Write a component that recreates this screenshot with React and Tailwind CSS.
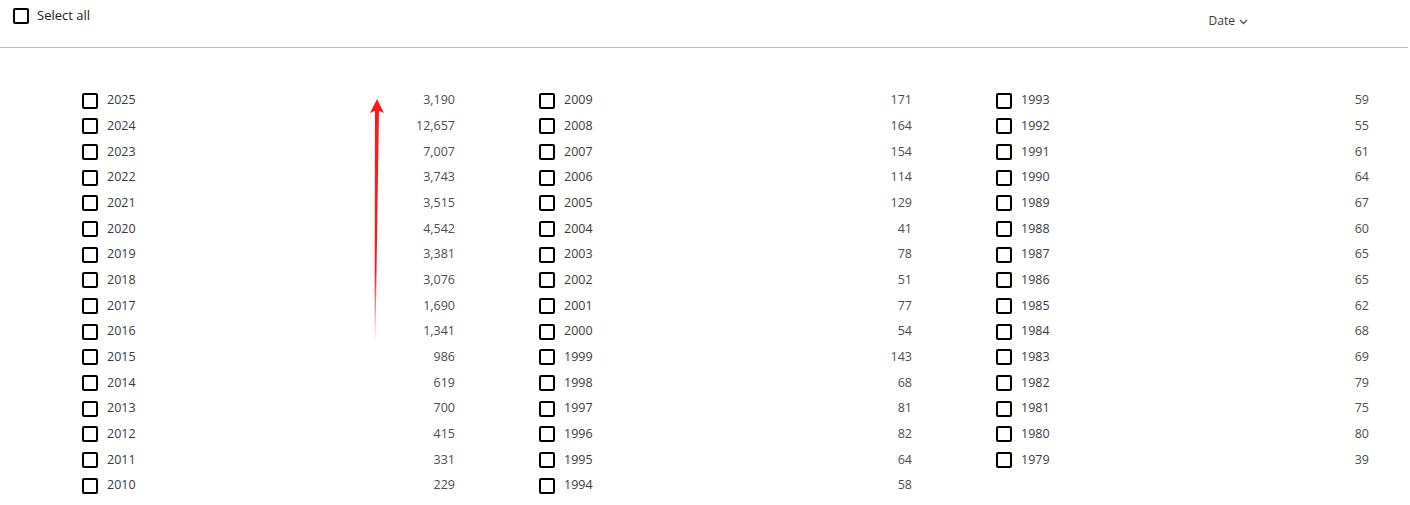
import React from 'react';

const columns = [
    [
        ['2025', '3,190'], ['2024', '12,657'], ['2023', '7,007'], ['2022', '3,743'],
        ['2021', '3,515'], ['2020', '4,542'], ['2019', '3,381'], ['2018', '3,076'],
        ['2017', '1,690'], ['2016', '1,341'], ['2015', '986'], ['2014', '619'],
        ['2013', '700'], ['2012', '415'], ['2011', '331'], ['2010', '229'],
    ],
    [
        ['2009', '171'], ['2008', '164'], ['2007', '154'], ['2006', '114'],
        ['2005', '129'], ['2004', '41'], ['2003', '78'], ['2002', '51'],
        ['2001', '77'], ['2000', '54'], ['1999', '143'], ['1998', '68'],
        ['1997', '81'], ['1996', '82'], ['1995', '64'], ['1994', '58'],
    ],
    [
        ['1993', '59'], ['1992', '55'], ['1991', '61'], ['1990', '64'],
        ['1989', '67'], ['1988', '60'], ['1987', '65'], ['1986', '65'],
        ['1985', '62'], ['1984', '68'], ['1983', '69'], ['1982', '79'],
        ['1981', '75'], ['1980', '80'], ['1979', '39'],
    ],
];

const Box = () => (
    <span className="block w-4 h-4 shrink-0 border-2 border-black rounded-[2px] bg-white" />
);

const YearRow = ({ year, count }) => (
    <label className="flex items-center h-[25.67px] cursor-pointer">
        <Box />
        <span className="ml-[9px] text-[12.5px] text-[#3a3a3a]">{year}</span>
        <span className="ml-auto text-[12.5px] text-[#4d4d4d]">{count}</span>
    </label>
);

export default function App() {
    return (
        <div className="relative w-[1408px] h-[505px] bg-white" style={{ fontFamily: '"Open Sans", "Liberation Sans", sans-serif' }}>
            <div className="flex h-[48px] border-b border-[#bdbdbd]">
                <label className="flex items-center h-[16px] mt-[8px] ml-[13px] cursor-pointer">
                    <Box />
                    <span className="ml-[8px] text-[13px] text-[#1a1a1a]">Select all</span>
                </label>
                <button className="flex items-center ml-auto mr-[160px] mt-[12px] h-[18px] text-[12px] text-[#3a3a3a]">
                    Date
                    <svg className="ml-[4px] mt-[1px]" width="9" height="6" viewBox="0 0 9 6" fill="none">
                        <path d="M1 1l3.5 3.5L8 1" stroke="#555" strokeWidth="1.3" />
                    </svg>
                </button>
            </div>

            <div className="grid grid-cols-[373px_373px_373px] gap-x-[84px] ml-[82px] pt-[40px]">
                {columns.map((col, i) => (
                    <div key={i} className="flex flex-col">
                        {col.map(([y, c]) => <YearRow key={y} year={y} count={c} />)}
                    </div>
                ))}
            </div>

            {/* red annotation arrow */}
            <svg className="absolute left-0 top-0 pointer-events-none" width="1408" height="505">
                <defs>
                    <linearGradient id="fade" x1="0" y1="1" x2="0" y2="0">
                        <stop offset="0" stopColor="#ff2020" stopOpacity="0.05" />
                        <stop offset="0.3" stopColor="#ff1a1a" stopOpacity="1" />
                        <stop offset="1" stopColor="#ff1a1a" />
                    </linearGradient>
                </defs>
                <polygon points="374.6,343 375.4,343 379,110 375,110" fill="url(#fade)" />
                <polygon points="377,99 384,113 377,110 370,113" fill="#ff1a1a" />
            </svg>
        </div>
    );
}
